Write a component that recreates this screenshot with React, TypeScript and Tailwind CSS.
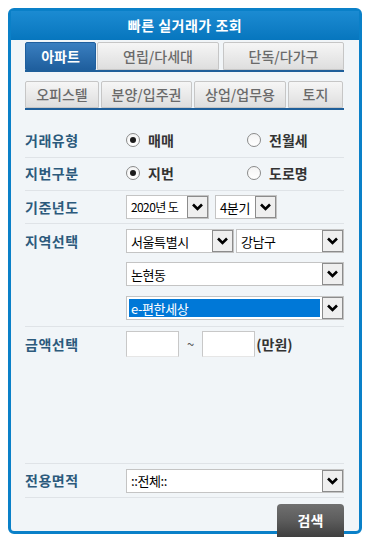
import React from "react";

const FONT = "font-['Noto_Sans_CJK_KR','Noto_Sans',sans-serif]";

function Chevron() {
  return (
    <svg width="11" height="8" viewBox="0 0 11 8">
      <polyline points="1,1.5 5.5,6 10,1.5" fill="none" stroke="#000" strokeWidth="2.6" />
    </svg>
  );
}

interface SelectBoxProps {
  text: string;
  width: string;
  selected?: boolean;
  textSize?: string;
}

function SelectBox({ text, width, selected, textSize = "text-[13px] tracking-[-0.4px]" }: SelectBoxProps) {
  return (
    <div className={`${width} h-[24px] flex border border-[#c4c4c4] bg-white`}>
      <div className="flex-1 flex items-center p-[2px] min-w-0">
        <div
          className={`w-full h-full flex items-center pl-[2px] ${textSize} leading-none whitespace-nowrap overflow-hidden ${
            selected ? "bg-[#0078d7] text-white" : "text-black"
          }`}
        >
          {text}
        </div>
      </div>
      <div className="w-[21px] h-full flex items-center justify-center bg-[#efefef] border border-[#8c8c8c]">
        <Chevron />
      </div>
    </div>
  );
}

function Radio({ checked, label }: { checked?: boolean; label: string }) {
  return (
    <div className="flex items-center gap-[8px]">
      <div className="w-[14px] h-[14px] rounded-full border border-[#8a8a8a] bg-gradient-to-b from-[#f4f4f4] to-white flex items-center justify-center">
        {checked && <div className="w-[6px] h-[6px] rounded-full bg-[#1c1c1c]" />}
      </div>
      <span className="text-[14px] font-bold text-[#333]">{label}</span>
    </div>
  );
}

function Tab({ label, width, active, className = "" }: { label: string; width: string; active?: boolean; className?: string }) {
  return (
    <div
      className={`${width} ${className} h-full flex items-center justify-center rounded-t-[2px] border text-[14px] ${
        active
          ? "bg-gradient-to-b from-[#3a7fc0] to-[#1f5f9e] border-[#1f5f9e] text-white font-bold"
          : "bg-gradient-to-b from-[#f6f6f6] to-[#dedede] border-[#c6c6c6] text-[#6a6a6a] font-medium"
      }`}
    >
      {label}
    </div>
  );
}

function Label({ children }: { children: React.ReactNode }) {
  return <div className="w-[101px] shrink-0 text-[14px] font-bold text-[#2c5a7c] tracking-[0.5px]">{children}</div>;
}

export default function App() {
  return (
    <div className={`w-[371px] h-[547px] bg-white pt-[8px] pl-[8px] ${FONT}`}>
      <div className="w-[354px] h-[526px] rounded-[6px] border-[3px] border-[#0a80c8] bg-[#f1f5f8] flex flex-col">
        {/* Header */}
        <div className="h-[29px] shrink-0 bg-gradient-to-b from-[#1b8bd2] to-[#0676be] flex items-center justify-center text-white text-[14px] font-bold tracking-[0.5px]">
          빠른 실거래가 조회
        </div>

        <div className="pl-[14px] pr-[15px] flex flex-col">
          {/* Tabs row 1 */}
          <div className="mt-[2px] h-[30px] flex items-end border-b-2 border-[#1f5f9a]">
            <Tab label="아파트" width="w-[71px]" active />
            <Tab label="연립/다세대" width="w-[122px]" className="ml-[1px]" />
            <Tab label="단독/다가구" width="w-[121px]" className="ml-[4px]" />
          </div>

          {/* Tabs row 2 */}
          <div className="mt-[9px] h-[29px] flex items-end gap-[2px] border-b-2 border-[#1f5f9a]">
            <Tab label="오피스텔" width="w-[74px]" />
            <Tab label="분양/입주권" width="w-[91px]" />
            <Tab label="상업/업무용" width="w-[92px]" />
            <Tab label="토지" width="w-[55px]" />
          </div>

          {/* 거래유형 */}
          <div className="mt-[15px] h-[33px] flex items-center pb-[2px] border-b border-[#dfe3e7]">
            <Label>거래유형</Label>
            <div className="w-[121px]">
              <Radio checked label="매매" />
            </div>
            <Radio label="전월세" />
          </div>

          {/* 지번구분 */}
          <div className="h-[33px] flex items-center pb-[2px] border-b border-[#dfe3e7]">
            <Label>지번구분</Label>
            <div className="w-[121px]">
              <Radio checked label="지번" />
            </div>
            <Radio label="도로명" />
          </div>

          {/* 기준년도 */}
          <div className="h-[33px] flex items-center border-b border-[#dfe3e7]">
            <Label>기준년도</Label>
            <SelectBox text="2020년 도" width="w-[83px]" textSize="text-[12px] tracking-[-0.6px]" />
            <div className="ml-[6px]">
              <SelectBox text="4분기" width="w-[62px]" />
            </div>
          </div>

          {/* 지역선택 */}
          <div className="h-[103px] flex pt-[5px] border-b border-[#dfe3e7]">
            <div className="pt-[2px]">
              <Label>지역선택</Label>
            </div>
            <div className="flex flex-col gap-[9px]">
              <div className="flex gap-[2px]">
                <SelectBox text="서울특별시" width="w-[108px]" />
                <SelectBox text="강남구" width="w-[108px]" />
              </div>
              <SelectBox text="논현동" width="w-[218px]" />
              <div className="mt-[1px]">
                <SelectBox text="e-편한세상" width="w-[218px]" selected />
              </div>
            </div>
          </div>

          {/* 금액선택 */}
          <div className="h-[137px] flex items-start pt-[4px] border-b border-[#dfe3e7]">
            <div className="h-[26px] flex items-center">
              <Label>금액선택</Label>
            </div>
            <div className="flex items-center h-[26px]">
              <div className="w-[53px] h-[26px] bg-white border border-[#c8c8c8] border-b-[#e6e6e6]" />
              <span className="mx-[8px] text-[13px] text-[#555]">~</span>
              <div className="w-[53px] h-[26px] bg-white border border-[#c8c8c8] border-b-[#e6e6e6]" />
              <span className="ml-[1px] text-[14px] font-bold text-[#333]">(만원)</span>
            </div>
          </div>

          {/* 전용면적 */}
          <div className="h-[34px] flex items-center border-b border-[#dfe3e7]">
            <Label>전용면적</Label>
            <SelectBox text="::전체::" width="w-[218px]" />
          </div>

          {/* 검색 */}
          <div className="mt-[6px] flex justify-end">
            <div className="w-[67px] h-[33px] rounded-t-[4px] bg-gradient-to-b from-[#707070] via-[#5c5c5c] to-[#3f3f3f] flex items-center justify-center text-white text-[14px] font-bold">
              검색
            </div>
          </div>
        </div>
      </div>
    </div>
  );
}
